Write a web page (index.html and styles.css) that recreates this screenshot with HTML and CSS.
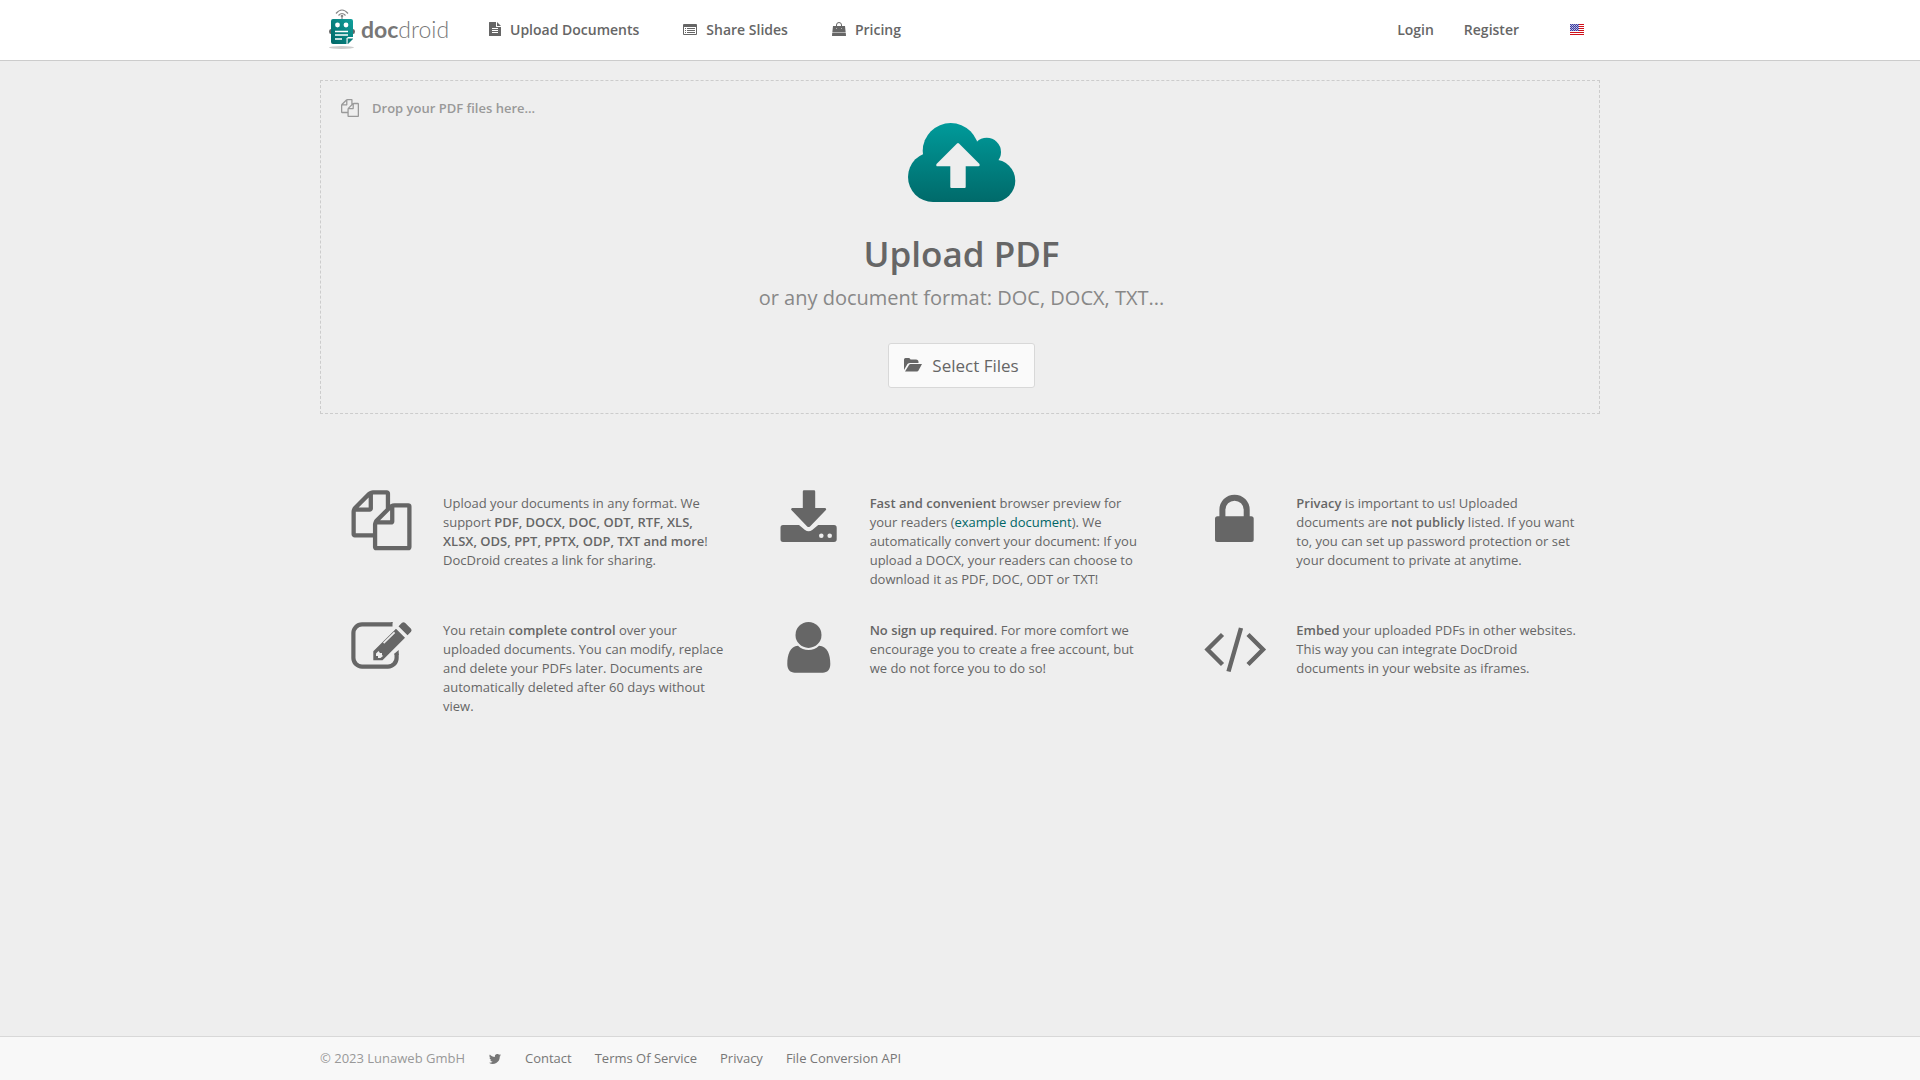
FILE: index.html
```html
<!DOCTYPE html>
<html lang="en">
<head>
<meta charset="utf-8">
<meta name="viewport" content="width=device-width, initial-scale=1">
<title>DocDroid - Upload PDF</title>
<link rel="stylesheet" href="styles.css">
</head>
<body>
<header class="header">
  <div class="container header-bar">
    <a class="logo" href="#" aria-label="DocDroid">
      <svg class="logo-mark" viewBox="0 0 26 42" aria-hidden="true">
        <defs><linearGradient id="robot" x1="0" y1="1" x2="1" y2="0"><stop offset="0" stop-color="#066"/><stop offset="1" stop-color="#11a09c"/></linearGradient></defs>
        <g fill="none" stroke="#888" stroke-width="1.2"><path d="M7 5.500Q13-1.500 19 5.500M9.500 7.500Q13 3.500 16.500 7.500M13 8v4"/></g>
        <circle cx="13" cy="8" r="1.300" fill="#888"/>
        <ellipse cx="12.500" cy="39.500" rx="12.500" ry="1.500" fill="#ccc"/>
        <path d="M2 21q-2 0-2 2.500T2 26zM24 21q2 0 2 2.500T24 26z" fill="#666"/>
        <path d="M4 11h18a2 2 0 0 1 2 2v16h-5l-1 7H4a2 2 0 0 1-2-2V13a2 2 0 0 1 2-2z" fill="url(#robot)"/>
        <path d="M24 30v1l-5 5h-1l1-6z" fill="#087b79"/>
        <path d="M18 36v-6h6" fill="none" stroke="#fff" stroke-width="1"/>
        <circle cx="8.500" cy="17" r="2.400" fill="#fff"/><circle cx="17" cy="17" r="2.400" fill="#fff"/>
        <path d="M6 23.500h13M6 27h13M6 31h7" stroke="#fff" stroke-width="1.300"/>
      </svg>
      <span class="logo-text"><b>doc</b>droid</span>
    </a>
    <nav class="nav" aria-label="Main">
      <a class="nav-link" href="#">
        <svg class="icon-file" viewBox="0 0 12 14" aria-hidden="true"><path fill="#666" fill-rule="evenodd" d="M.5 0H7v4.500a.5.500 0 0 0 .5.500H12v8.500a.5.500 0 0 1-.5.500H.5a.5.500 0 0 1-.5-.5V.5A.5.500 0 0 1 .5 0zM8 0l4 4H8zM3 6v1h6V6zM3 8v1h6V8zM3 10v1h6v-1z"/></svg>
        Upload Documents</a>
      <a class="nav-link" href="#">
        <svg class="icon-nav" viewBox="0 0 14 14" aria-hidden="true"><path fill="#666" fill-rule="evenodd" d="M1 2h12a1 1 0 0 1 1 1v9a1 1 0 0 1-1 1H1a1 1 0 0 1-1-1V3a1 1 0 0 1 1-1zM1 5v7h12V5zM2 6h1v1H2zM4 6h8v1H4zM2 8h1v1H2zM4 8h8v1H4zM2 10h1v1H2zM4 10h8v1H4z"/></svg>
        Share Slides</a>
      <a class="nav-link" href="#">
        <svg class="icon-nav" viewBox="0 0 14 14" aria-hidden="true"><path d="M4.500 6V3a2.500 2.500 0 0 1 5 0v3" fill="none" stroke="#666"/><path fill="#666" d="M1 4h3v2.500h1V4h4v2.500h1V4h3l.7 6.500H.3zM.2 11h13.600l.2 2.500q0 .5-.5.500H.5q-.5 0-.5-.5z"/></svg>
        Pricing</a>
    </nav>
    <nav class="account" aria-label="Account">
      <a href="#">Login</a>
      <a href="#">Register</a>
      <button class="language" type="button" aria-label="Language: English">
        <svg viewBox="0 0 14 11" aria-hidden="true"><path fill="#fff" d="M0 0h14v11H0z"/><path d="M0 .5h14M0 2.500h14M0 4.500h14M0 6.500h14M0 8.500h14M0 10.500h14" stroke="#d0101a"/><path fill="#3c3ca0" d="M0 0h9v7H0z"/><path d="M0 1.500h9M0 3.500h9M0 5.500h9" stroke="#c8c8e8" stroke-dasharray="1"/><path d="M1 .5h8M1 2.500h8M1 4.500h8M1 6.500h8" stroke="#9c9cd0" stroke-dasharray="1"/></svg>
      </button>
    </nav>
  </div>
</header>

<main class="container main">
  <section class="dropzone">
    <p class="drop-hint">
      <svg viewBox="0 0 1792 1792" aria-hidden="true"><path fill="#999" d="M1696 384q40 0 68 28t28 68v1216q0 40-28 68t-68 28h-960q-40 0-68-28t-28-68v-288h-544q-40 0-68-28t-28-68v-672q0-40 20-88t48-76l408-408q28-28 76-48t88-20h416q40 0 68 28t28 68v328q68-40 128-40h416zm-544 213l-299 299h299v-299zm-640-384l-299 299h299v-299zm196 647l316-316v-416h-384v416q0 40-28 68t-68 28h-416v640h512v-256q0-40 20-88t48-76zm956 804v-1152h-384v416q0 40-28 68t-68 28h-416v640h896z"/></svg>
      Drop your PDF files here...
    </p>
    <div class="upload">
      <svg class="cloud" viewBox="0 0 108 80" aria-hidden="true">
        <defs><linearGradient id="cloud" gradientUnits="userSpaceOnUse" x1="0" y1="0" x2="0" y2="79"><stop offset="0" stop-color="#009a9a"/><stop offset="1" stop-color="#006a6a"/></linearGradient></defs>
        <g fill="url(#cloud)"><circle cx="25" cy="54" r="25"/><circle cx="42.700" cy="28" r="28"/><circle cx="78.700" cy="29" r="14.300"/><circle cx="86" cy="57.700" r="21.300"/><path d="M25 30h47l14 15v34H25z"/></g>
        <path fill="#eee" d="M49 20.400q1-1 2 0L71.500 41q.8 2.300-1 2.300H57.700V64q0 1-1 1H43.300q-1 0-1-1V43.300H29.500q-1.800 0-1-2.300z"/>
      </svg>
      <h1>Upload PDF</h1>
      <p class="formats">or any document format: DOC, DOCX, TXT...</p>
      <button class="select" type="button">
        <svg viewBox="0 0 18 14" aria-hidden="true"><path fill="#666" d="M0 12V1.500Q0 0 1.500 0H5q1 0 1.500 1.500H12Q14.500 1.500 14.500 4v1H6q-1.500 0-2.500 1zM1 13.500L5 7q.5-1 1.500-1H18l-3.500 6.500q-.5 1-1.500 1z"/></svg>
        Select Files</button>
    </div>
  </section>

  <section class="features">
    <article class="feature">
      <svg viewBox="0 0 64 64" aria-hidden="true"><path fill="#666" transform="translate(1.500 2.300) scale(.0335)" d="M1696 384q40 0 68 28t28 68v1216q0 40-28 68t-68 28h-960q-40 0-68-28t-28-68v-288h-544q-40 0-68-28t-28-68v-672q0-40 20-88t48-76l408-408q28-28 76-48t88-20h416q40 0 68 28t28 68v328q68-40 128-40h416zm-544 213l-299 299h299v-299zm-640-384l-299 299h299v-299zm196 647l316-316v-416h-384v416q0 40-28 68t-68 28h-416v640h512v-256q0-40 20-88t48-76zm956 804v-1152h-384v416q0 40-28 68t-68 28h-416v640h896z"/></svg>
      <p>Upload your documents in any format. We support <b>PDF, DOCX, DOC, ODT, RTF, XLS, XLSX, ODS, PPT, PPTX, ODP, TXT and more</b>! DocDroid creates a link for sharing.</p>
    </article>
    <article class="feature">
      <svg viewBox="0 0 64 64" aria-hidden="true"><path fill="#666" d="M27 2.300h10q1.200 0 1.200 1.200V20H48q1.800.5.900 2L33 38.500q-1.400 1.200-2.800 0L14.400 22q-.9-1.500.9-2h10.500V3.500q0-1.200 1.200-1.200z"/><path fill="#666" fill-rule="evenodd" d="M6 37h16l6 5q3.600 2.500 7.200 0l6-5H57q2.700 0 2.700 2.700v11.600Q59.700 54 57 54H6q-2.500 0-2.500-2.700V39.700Q3.500 37 6 37zm38.300 8.400a2.300 2.300 0 1 0 0 4.600 2.300 2.300 0 1 0 0-4.600zm8.400 0a2.300 2.300 0 1 0 0 4.600 2.300 2.300 0 1 0 0-4.600z"/></svg>
      <p><b>Fast and convenient</b> browser preview for your readers (<a href="#">example document</a>). We automatically convert your document: If you upload a DOCX, your readers can choose to download it as PDF, DOC, ODT or TXT!</p>
    </article>
    <article class="feature">
      <svg viewBox="0 0 64 64" aria-hidden="true"><rect x="12" y="28.300" width="38.700" height="25.700" rx="2.500" fill="#666"/><path d="M19.400 30v-8.200a12.150 12.150 0 0 1 24.300 0V30" fill="none" stroke="#666" stroke-width="6"/></svg>
      <p><b>Privacy</b> is important to us! Uploaded documents are <b>not publicly</b> listed. If you want to, you can set up password protection or set your document to private at anytime.</p>
    </article>
    <article class="feature">
      <svg viewBox="0 0 64 64" aria-hidden="true"><path d="M42.500 9.400H12A8.600 8.600 0 0 0 3.400 18v25a8.600 8.600 0 0 0 8.600 8.600h26A8.600 8.600 0 0 0 46.600 43v-4.500" fill="none" stroke="#666" stroke-width="4.200"/><path fill="#666" d="M44.500 40v-1.500l4.200-3.500v5zM41 7.300h2l-2.500 3.500zM23.300 45.300v-9L46 13.800l9 9-22.500 22.500zM48.500 11.300l3.500-3.500q1.500-1.200 3 0l6 6q1.200 1.500 0 3l-3.500 3.500z"/><path fill="#eee" d="M33 27.500l11-10.800 1.200 1.200-11 10.800zM26 38.500l2.500-2.500 1.500 2h2v2l1 1-2.500 2H28v-2h-2z"/></svg>
      <p>You retain <b>complete control</b> over your uploaded documents. You can modify, replace and delete your PDFs later. Documents are automatically deleted after 60 days without view.</p>
    </article>
    <article class="feature">
      <svg viewBox="0 0 64 64" aria-hidden="true"><circle cx="31.500" cy="19.900" r="13" fill="#666"/><path fill="#666" d="M21 30.700q4.500 4.300 10.500 4.300T42 30.700c8.500.5 11.300 9 11.300 18.300 0 5.500-3 8.700-7.500 8.700h-28c-4.500 0-7.500-3.200-7.500-8.700 0-9.300 2.800-17.800 10.700-18.300z"/></svg>
      <p><b>No sign up required</b>. For more comfort we encourage you to create a free account, but we do not force you to do so!</p>
    </article>
    <article class="feature">
      <svg viewBox="0 0 64 64" aria-hidden="true"><path d="M19.500 19.500L4.500 34.500l15 15M45 19.500l15 15-15 15M38 13L25.500 56.500" fill="none" stroke="#666" stroke-width="4.400"/></svg>
      <p><b>Embed</b> your uploaded PDFs in other websites. This way you can integrate DocDroid documents in your website as iframes.</p>
    </article>
  </section>
</main>

<footer class="footer">
  <div class="container footer-bar">
    <span>© 2023 Lunaweb GmbH</span>
    <a class="twitter" href="#" aria-label="Twitter"><svg viewBox="0 0 24 20" aria-hidden="true"><path fill="#777" d="M24 2.400c-.9.400-1.800.7-2.800.8 1-.6 1.800-1.600 2.200-2.700-1 .6-2 1-3.100 1.200a4.900 4.900 0 0 0-8.400 4.500C7.700 6 4.100 4 1.700 1a4.900 4.900 0 0 0 1.500 6.600c-.8 0-1.600-.2-2.200-.6v.1c0 2.400 1.700 4.400 3.900 4.800-.7.200-1.500.2-2.200.1.600 2 2.400 3.400 4.600 3.400A9.900 9.900 0 0 1 0 17.500a14 14 0 0 0 21.500-12.400c1-.7 1.800-1.600 2.500-2.700z"/></svg></a>
    <a href="#">Contact</a>
    <a href="#">Terms Of Service</a>
    <a href="#">Privacy</a>
    <a href="#">File Conversion API</a>
  </div>
</footer>
</body>
</html>
```
FILE: styles.css
```css
* {
  box-sizing: border-box;
}

body {
  margin: 0;
  min-height: 100vh;
  display: flex;
  flex-direction: column;
  background: #eee;
  color: #666;
  font: 13px/19px "Open Sans", "Noto Sans", sans-serif;
}

a {
  color: inherit;
  text-decoration: none;
}

b {
  font-weight: 600;
}

h1,
p {
  margin: 0;
}

svg {
  display: block;
  flex: none;
}

button {
  font: inherit;
  color: inherit;
  cursor: pointer;
}

.container {
  width: 100%;
  max-width: 1280px;
  margin: 0 auto;
}

/* Header */
.header {
  background: #fff;
  border-bottom: 1px solid #ccc;
  font-size: 14px;
  font-weight: 600;
}

.header-bar {
  display: flex;
  align-items: center;
  height: 60px;
  padding: 0 16px 2px 9px;
}

.logo {
  display: flex;
  align-items: center;
  gap: 6px;
  width: 160px;
}

.logo-mark {
  width: 26px;
  height: 42px;
}

.logo-text {
  font: 300 23px/26px Lato, sans-serif;
  color: #777;
}

.logo-text b {
  font-weight: 700;
}

.nav {
  display: flex;
  gap: 44px;
}

.nav-link {
  display: flex;
  align-items: center;
  gap: 9px;
}

.icon-file {
  width: 12px;
  height: 14px;
}

.icon-nav {
  width: 14px;
  height: 14px;
}

.account {
  display: flex;
  align-items: center;
  gap: 30px;
  margin-left: auto;
}

.language {
  margin-left: 21px;
  padding: 0;
  border: 0;
  background: none;
}

.language svg {
  width: 14px;
  height: 11px;
}

/* Upload area */
.main {
  flex: 1;
  padding: 19px 0 40px;
}

.dropzone {
  padding: 15px 20px 25px;
  border: 1px dashed #ccc;
}

.drop-hint {
  display: flex;
  align-items: center;
  gap: 13px;
  height: 24px;
  color: #999;
  font-weight: 600;
}

.drop-hint svg {
  width: 18px;
  height: 18px;
}

.upload {
  display: flex;
  flex-direction: column;
  align-items: center;
  padding: 3px 0 0 3px;
}

.cloud {
  width: 108px;
  height: 80px;
}

h1 {
  margin-top: 27px;
  font-size: 35px;
  line-height: 48px;
  font-weight: 600;
}

.formats {
  margin-top: 4px;
  color: #888;
  font-size: 20px;
  line-height: 32px;
}

.select {
  display: flex;
  align-items: center;
  gap: 10px;
  height: 45px;
  margin-top: 29px;
  padding: 0 15px 1px;
  border: 1px solid #d8d8d8;
  border-radius: 3px;
  background: #fafafa;
  font-size: 17px;
}

.select svg {
  width: 18px;
  height: 14px;
}

/* Feature list */
.features {
  display: grid;
  grid-template-columns: repeat(3, 1fr);
  row-gap: 26px;
  margin-top: 74px;
}

.feature {
  display: flex;
  gap: 29px;
  padding: 0 22px 0 30px;
}

.feature svg {
  width: 64px;
  height: 64px;
}

.feature p {
  padding-top: 6px;
}

.feature p a {
  color: #066;
}

/* Footer */
.footer {
  border-top: 1px solid #d8d8d8;
  background: #f8f8f8;
}

.footer-bar {
  display: flex;
  align-items: center;
  gap: 23px;
  height: 43px;
  color: #777;
}

.footer-bar span {
  color: #999;
}

.twitter {
  padding: 0 1px;
}

.twitter svg {
  width: 12px;
  height: 10px;
}

@media (max-width: 900px) {
  .header-bar,
  .footer-bar {
    flex-wrap: wrap;
    height: auto;
  }

  .features {
    grid-template-columns: 1fr;
  }
}
```
